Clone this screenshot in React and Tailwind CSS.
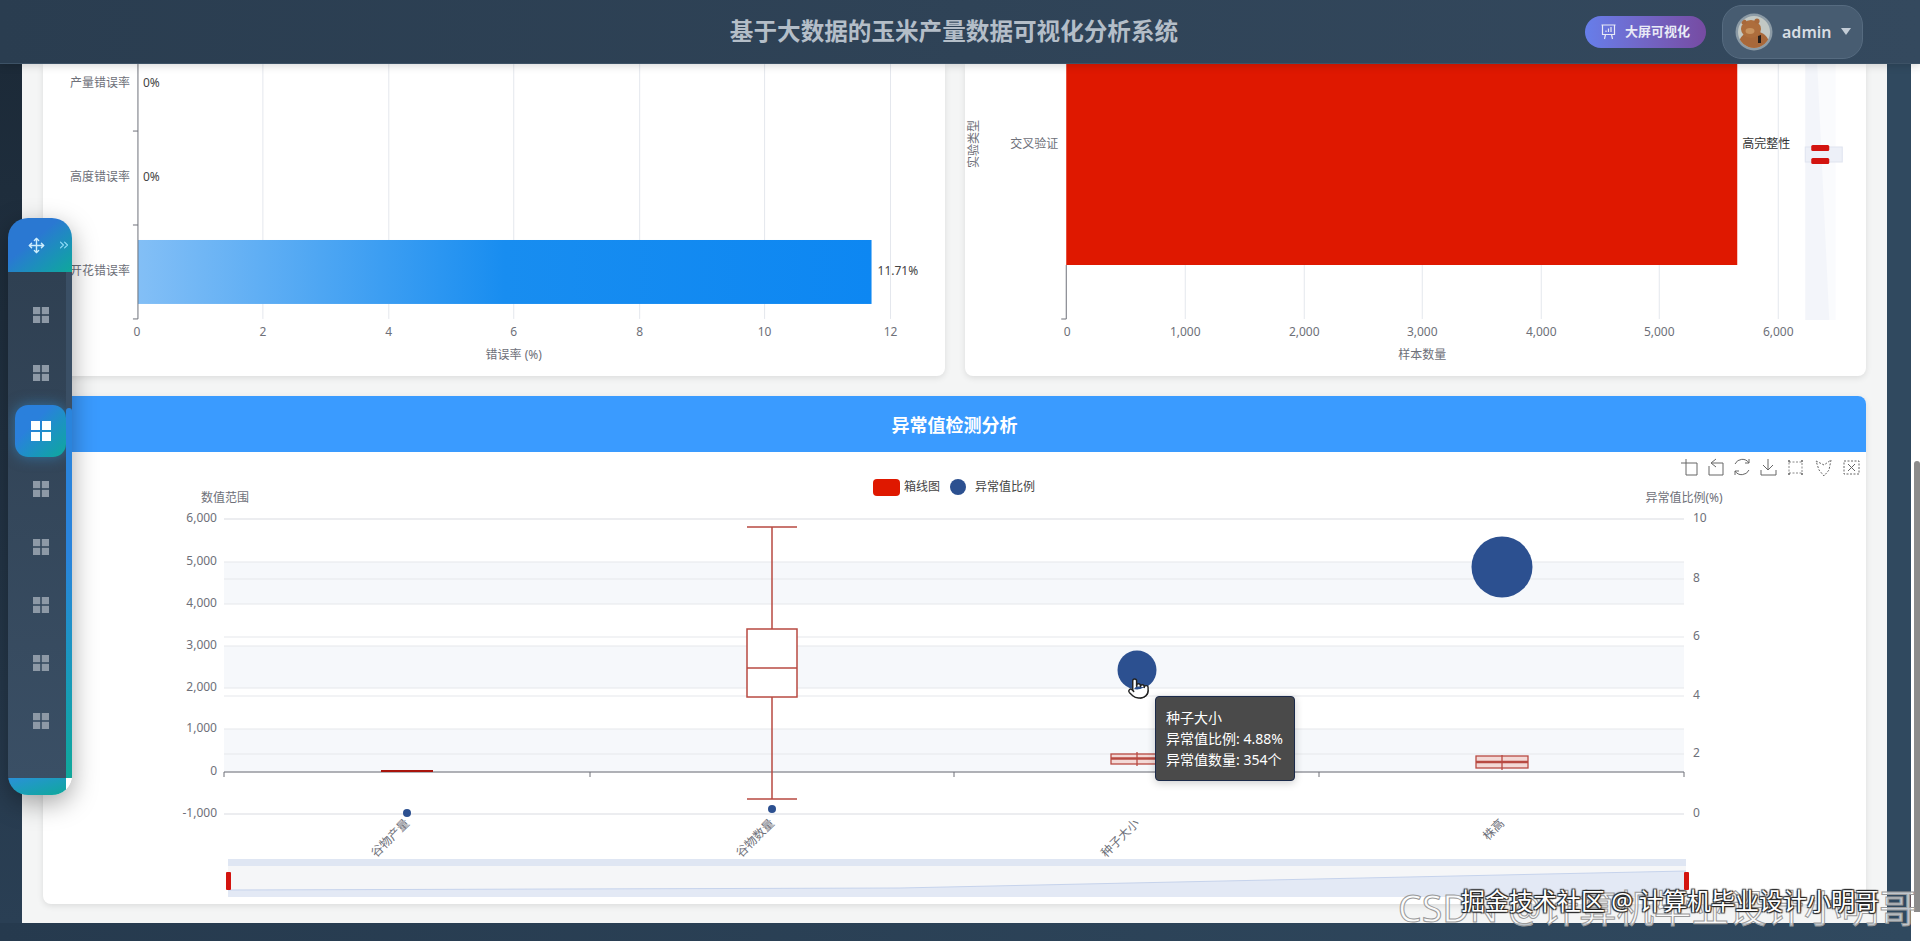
import React from 'react';
import { Move, ChevronsRight, Pointer } from 'lucide-react';

const FONT = '"Noto Sans", "Noto Sans CJK SC", sans-serif';
const AXIS = '#6e7079';

const GridIcon = ({ active }) => (
  <svg
    width={active ? 20 : 16}
    height={active ? 20 : 16}
    viewBox="0 0 16 16"
    fill={active ? '#ffffff' : '#8d99a6'}
  >
    <rect x="0" y="0" width="7.2" height="7.2" />
    <rect x="8.8" y="0" width="7.2" height="7.2" />
    <rect x="0" y="8.8" width="7.2" height="7.2" />
    <rect x="8.8" y="8.8" width="7.2" height="7.2" />
  </svg>
);

const FloatNav = () => {
  const items = [0, 1, 2, 3, 4, 5, 6, 7];
  return (
    <div className="absolute left-2 top-[218px] z-20 flex h-[577px] w-16 flex-col overflow-hidden rounded-[20px] shadow-[0_8px_26px_rgba(0,0,0,0.35)]">
      <div className="relative flex h-[54px] items-center bg-gradient-to-br from-[#2a78d2] from-40% to-[#10a89a] pl-5">
        <Move size={17} strokeWidth={2} className="text-[#cfeefc]" />
        <ChevronsRight size={14} className="ml-[12px] text-[#8fdcf8]" />
      </div>
      <div className="flex flex-1">
        <div className="flex-1 bg-gradient-to-b from-[#2f4052] to-[#3a4f65] pt-[14px]">
          {items.map((i) => (
            <div key={i} className="ml-[7px] flex h-[58px] w-[51px] items-center justify-center">
              {i === 2 ? (
                <div className="flex h-[52px] w-[51px] items-center justify-center rounded-[13px] bg-gradient-to-br from-[#2a80dc] from-35% to-[#10a89a] shadow-[0_0_14px_rgba(52,152,219,0.55)]">
                  <GridIcon active />
                </div>
              ) : (
                <GridIcon />
              )}
            </div>
          ))}
        </div>
        <div className="flex w-[6px] flex-col bg-[#3a4f65] pt-[136px]">
          <div className="flex-1 rounded-t-[3px] bg-gradient-to-b from-[#2a84dc] from-40% to-[#10a89a]" />
        </div>
      </div>
      <div className="flex h-[17px]">
        <div className="flex-1 bg-gradient-to-br from-[#2a90d8] to-[#10a89a]" />
        <div className="w-[6px] bg-white" />
      </div>
    </div>
  );
};

const Avatar = () => (
  <svg width="38" height="38" viewBox="0 0 38 38">
    <defs>
      <clipPath id="avatarClip">
        <circle cx="19" cy="19" r="16" />
      </clipPath>
    </defs>
    <circle cx="19" cy="19" r="18.5" fill="#8c9ba6" />
    <circle cx="19" cy="19" r="16" fill="#c2c8c4" />
    <g clipPath="url(#avatarClip)">
      <ellipse cx="19" cy="31" rx="15" ry="13" fill="#a8683a" />
      <ellipse cx="16" cy="16" rx="10" ry="9" fill="#ad6d3c" />
      <circle cx="9" cy="9" r="2.6" fill="#a8683a" />
      <circle cx="22" cy="8" r="2.6" fill="#a8683a" />
      <ellipse cx="15" cy="18" rx="4.5" ry="3" fill="#c8935f" />
      <path d="M23 23L26 22L26 30L23 30Z" fill="#241c18" />
    </g>
  </svg>
);

const Header = () => (
  <header className="relative z-10 flex h-16 items-center border-b border-[#3d5266] bg-gradient-to-r from-[#2a3d50] to-[#34495e] pr-[57px] shadow-[0_2px_8px_rgba(0,0,0,0.15)]">
    <h1 className="flex-1 pl-[323px] text-center text-[23.6px] font-bold text-[#b4bec8]">
      基于大数据的玉米产量数据可视化分析系统
    </h1>
    <div className="flex items-center gap-4">
      <button className="flex h-8 w-[121px] items-center justify-center gap-[9px] rounded-2xl bg-gradient-to-r from-[#667eea] to-[#764ba2] text-[13px] font-bold text-[#e8eaf6]">
        <svg width="15" height="16" viewBox="0 0 15 16" fill="none" stroke="#e8eaf6" strokeWidth="1.2">
          <path d="M0.5 1H14.5M1.5 1V10.5H13.5V1M4.5 10.5L3.5 15M10.5 10.5L11.5 15" />
          <path d="M5 8V6.5M7.5 8V4.5M10 8V3" />
        </svg>
        大屏可视化
      </button>
      <div className="flex h-[54px] w-[141px] items-center rounded-[20px] border border-[#566b80] bg-[#475c71] pl-3">
        <Avatar />
        <span className="ml-[9px] text-[16px] font-semibold text-[#d7dde3]">admin</span>
        <span className="ml-[10px] h-0 w-0 border-x-[5px] border-t-[7px] border-x-transparent border-t-[#c3ccd6]" />
      </div>
    </div>
  </header>
);

const ErrorChart = () => {
  const ticks = [
    [137, 0],
    [263, 2],
    [389, 4],
    [514, 6],
    [640, 8],
    [765, 10],
    [891, 12],
  ];
  return (
    <svg viewBox="43 64 902 312" className="h-[312px] w-full" style={{ fontFamily: FONT }} fontSize="12">
      <defs>
        <linearGradient id="errBar" x1="0" y1="0" x2="1" y2="0">
          <stop offset="0" stopColor="#83bff6" />
          <stop offset="0.5" stopColor="#188df0" />
          <stop offset="1" stopColor="#0d87f2" />
        </linearGradient>
      </defs>
      {ticks.slice(1).map(([x]) => (
        <line key={x} x1={x} x2={x} y1="64" y2="319" stroke="#e4e7ed" />
      ))}
      <rect x="138" y="240" width="734" height="64" fill="url(#errBar)" />
      <path d="M138 64V319M133 131H138M133 225H138M133 319H138" stroke="#6e7079" fill="none" />
      {ticks.map(([x, v]) => (
        <text key={x} x={x} y="336" textAnchor="middle" fill={AXIS}>
          {v}
        </text>
      ))}
      <text x="130" y="87" textAnchor="end" fill={AXIS}>产量错误率</text>
      <text x="130" y="181" textAnchor="end" fill={AXIS}>高度错误率</text>
      <text x="130" y="275" textAnchor="end" fill={AXIS}>开花错误率</text>
      <text x="143" y="87" fill="#444">0%</text>
      <text x="143" y="181" fill="#444">0%</text>
      <text x="878" y="275" fill="#444">11.71%</text>
      <text x="514" y="359" textAnchor="middle" fill={AXIS}>错误率 (%)</text>
    </svg>
  );
};

const SampleChart = () => {
  const ticks = [
    [1067, '0'],
    [1185, '1,000'],
    [1304, '2,000'],
    [1422, '3,000'],
    [1541, '4,000'],
    [1659, '5,000'],
    [1778, '6,000'],
  ];
  return (
    <svg viewBox="965 64 901 312" className="h-[312px] w-full" style={{ fontFamily: FONT }} fontSize="12">
      {ticks.slice(1).map(([x]) => (
        <line key={x} x1={x} x2={x} y1="64" y2="319" stroke="#e4e7ed" />
      ))}
      <rect x="1066" y="64" width="671" height="201" fill="#df1800" />
      <path d="M1066 265V319M1061 319H1066" stroke="#6e7079" fill="none" />
      {ticks.map(([x, v]) => (
        <text key={x} x={x} y="336" textAnchor="middle" fill={AXIS}>
          {v}
        </text>
      ))}
      <text x="1058" y="148" textAnchor="end" fill={AXIS}>交叉验证</text>
      <text x="1742" y="148" fill="#333">高完整性</text>
      <text x="1422" y="359" textAnchor="middle" fill={AXIS}>样本数量</text>
      <text transform="rotate(-90 978 144)" x="978" y="144" textAnchor="middle" fill={AXIS}>实验类型</text>
      <rect x="1805" y="64" width="30" height="256" fill="#f3f5fa" />
      <path d="M1817 64L1829 320H1835V64Z" fill="#fafbfd" />
      <rect x="1805" y="147" width="37" height="15" fill="#edf0f8" stroke="#dfe4ef" />
      <rect x="1811" y="145" width="18" height="6" rx="1.5" fill="#d3140f" />
      <rect x="1811" y="158" width="18" height="6" rx="1.5" fill="#d3140f" />
    </svg>
  );
};

const Toolbox = () => (
  <g fill="none" stroke="#666" strokeWidth="1">
    <path d="M1681 463H1697M1686 459V475H1697V463" />
    <path d="M1712 463H1723V475H1709V466M1716 459L1711 463L1716 467" />
    <path d="M1735 464A8 8 0 0 1 1749 463M1749 459V463H1745M1749 470A8 8 0 0 1 1735 471M1735 475V471H1739" />
    <path d="M1768 459V470M1763 465L1768 470L1773 465M1761 470V475H1776V470" />
    <rect x="1789" y="462" width="13" height="11" strokeDasharray="2 1.5" stroke="#888" />
    <path d="M1788 461H1790M1801 461H1803M1788 474H1790M1801 474H1803" strokeWidth="1.6" />
    <path d="M1816 461L1824 465L1831 460L1829 470L1824 476L1819 470Z" strokeDasharray="2 1.5" />
    <rect x="1844" y="461" width="15" height="13" strokeDasharray="2 1.5" />
    <path d="M1848 464L1855 471M1855 464L1848 471" />
  </g>
);

const OutlierChart = () => {
  const left = [
    [519, '6,000'],
    [562, '5,000'],
    [604, '4,000'],
    [646, '3,000'],
    [688, '2,000'],
    [729, '1,000'],
    [772, '0'],
    [814, '-1,000'],
  ];
  const right = [
    [519, '10'],
    [579, '8'],
    [637, '6'],
    [696, '4'],
    [754, '2'],
    [814, '0'],
  ];
  const red = '#b84a42';
  return (
    <svg viewBox="43 452 1823 452" className="h-[452px] w-full" style={{ fontFamily: FONT }} fontSize="12">
      <rect x="224" y="562" width="1460" height="42" fill="#f6f8fb" />
      <rect x="224" y="646" width="1460" height="42" fill="#f6f8fb" />
      <rect x="224" y="729" width="1460" height="43" fill="#f6f8fb" />
      {[...left, ...right].map(([y], i) => (
        <line key={i} x1="224" x2="1684" y1={y} y2={y} stroke="#e6e8ec" strokeWidth="1.2" />
      ))}
      <path d="M224 772H1684M224 772V777M590 772V777M954 772V777M1319 772V777M1684 772V777" stroke="#6e7079" fill="none" />

      <line x1="381" x2="433" y1="771" y2="771" stroke="#a8140c" strokeWidth="2" />

      <g stroke={red} strokeWidth="1.5" fill="#fff">
        <path d="M747 527H797M772 527V629M772 697V799M747 799H797" fill="none" />
        <rect x="747" y="629" width="50" height="68" />
        <line x1="747" x2="797" y1="668" y2="668" />
      </g>
      <g stroke={red} strokeWidth="1.3" fill="none">
        <rect x="1111" y="754" width="52" height="10" fill="#f3d9d6" />
        <path d="M1111 758.5H1163" strokeWidth="2.5" />
        <path d="M1137 752V766" />
        <rect x="1476" y="756" width="52" height="12" fill="#f3d9d6" />
        <path d="M1476 762H1528" strokeWidth="2.5" />
        <path d="M1502 755V770" />
      </g>

      <g fill="#2c5090">
        <circle cx="407" cy="813" r="4" />
        <circle cx="772" cy="809" r="4" />
        <circle cx="1137" cy="670" r="19.5" />
        <circle cx="1502" cy="567" r="30.5" />
      </g>

      {left.map(([y, v]) => (
        <text key={y} x="217" y={y + 3} textAnchor="end" fill={AXIS}>
          {v}
        </text>
      ))}
      {right.map(([y, v]) => (
        <text key={y} x="1693" y={y + 3} fill={AXIS}>
          {v}
        </text>
      ))}
      <text x="225" y="502" textAnchor="middle" fill={AXIS}>数值范围</text>
      <text x="1684" y="502" textAnchor="middle" fill={AXIS}>异常值比例(%)</text>

      <rect x="873" y="479" width="27" height="17" rx="4" fill="#df1800" />
      <text x="904" y="491" fill="#444">箱线图</text>
      <circle cx="958" cy="487" r="8" fill="#2c5090" />
      <text x="975" y="491" fill="#444">异常值比例</text>

      <Toolbox />

      <g fill={AXIS}>
        <text transform="rotate(-45 410 824)" x="410" y="824" textAnchor="end">谷物产量</text>
        <text transform="rotate(-45 775 824)" x="775" y="824" textAnchor="end">谷物数量</text>
        <text transform="rotate(-45 1140 824)" x="1140" y="824" textAnchor="end">种子大小</text>
        <text transform="rotate(-45 1505 824)" x="1505" y="824" textAnchor="end">株高</text>
      </g>

      <rect x="228" y="859" width="1458" height="7" fill="#dfe6f3" />
      <rect x="228" y="866" width="1458" height="31" fill="#f5f6f8" />
      <path d="M228 890L900 888L1686 871V897H228Z" fill="#e3e9f5" />
      <path d="M228 890L900 888L1686 871" fill="none" stroke="#c6d3ec" />
      <rect x="226" y="872" width="5" height="18" rx="1" fill="#d3140f" />
      <rect x="1684" y="872" width="5" height="18" rx="1" fill="#d3140f" />

      <Pointer x={1127} y={677} size={23} fill="#fff" stroke="#222" strokeWidth={1.5} />
    </svg>
  );
};

const Tooltip = () => (
  <div className="absolute left-[1112px] top-[300px] flex h-[85px] w-[140px] flex-col justify-center rounded border border-[#1b2a4a] bg-[#4a4a4a] pl-[10px] text-[14px] leading-[21px] text-white shadow-[0_2px_8px_rgba(0,0,0,0.2)]">
    <div>种子大小</div>
    <div>异常值比例: 4.88%</div>
    <div>异常值数量: 354个</div>
  </div>
);

const App = () => (
  <div
    className="relative flex h-[941px] w-[1920px] flex-col overflow-hidden bg-white"
    style={{ fontFamily: FONT }}
  >
    <Header />
    <div className="flex min-h-0 flex-1">
      <div className="flex w-[1911px] flex-col">
        <div className="flex min-h-0 flex-1">
          <div className="w-[22px] bg-gradient-to-b from-[#1c2a38] to-[#2a3f54]" />
          <main className="flex-1 bg-[#f4f5f5] px-[21px]">
            <div className="grid grid-cols-2 gap-5">
              <div className="h-[312px] overflow-hidden rounded-b-lg bg-white shadow-[0_2px_6px_rgba(0,0,0,0.1)]">
                <ErrorChart />
              </div>
              <div className="h-[312px] overflow-hidden rounded-b-lg bg-white shadow-[0_2px_6px_rgba(0,0,0,0.1)]">
                <SampleChart />
              </div>
            </div>
            <section className="relative mt-5 h-[508px] rounded-lg bg-white shadow-[0_2px_6px_rgba(0,0,0,0.1)]">
              <h2 className="flex h-14 items-center justify-center rounded-t-lg bg-[#3a9bff] pt-[3px] text-[18px] font-bold text-white">
                异常值检测分析
              </h2>
              <OutlierChart />
              <Tooltip />
            </section>
          </main>
          <div className="w-6 bg-[#30495f]" />
        </div>
        <div className="h-[18px] bg-gradient-to-r from-[#263a4e] to-[#30495f]" />
      </div>
      <aside className="flex-1 bg-white pl-[3px] pt-[397px]">
        <div className="h-[451px] rounded-t bg-[#8c8c8c]" />
      </aside>
    </div>
    <div className="absolute left-[1911px] top-[16px] h-6 w-[9px] pl-[5px]">
      <div className="h-full rounded-tl bg-gradient-to-b from-[#ffb020] to-[#ff9a10]" />
    </div>

    <FloatNav />

    <div className="pointer-events-none absolute left-[1398px] top-[890px] whitespace-nowrap text-[37.5px] leading-[36px] text-white/70 [-webkit-text-stroke:1px_#9a9a9a]">
      CSDN @计算机毕业设计小明哥
    </div>
    <div className="pointer-events-none absolute left-[1461px] top-[887px] whitespace-nowrap text-[24px] leading-[28px] text-white [text-shadow:1px_1px_1px_#222,-1px_-1px_1px_#222,1px_-1px_1px_#222,-1px_1px_1px_#222]">
      掘金技术社区 @ 计算机毕业设计小明哥
    </div>
  </div>
);

export default App;
